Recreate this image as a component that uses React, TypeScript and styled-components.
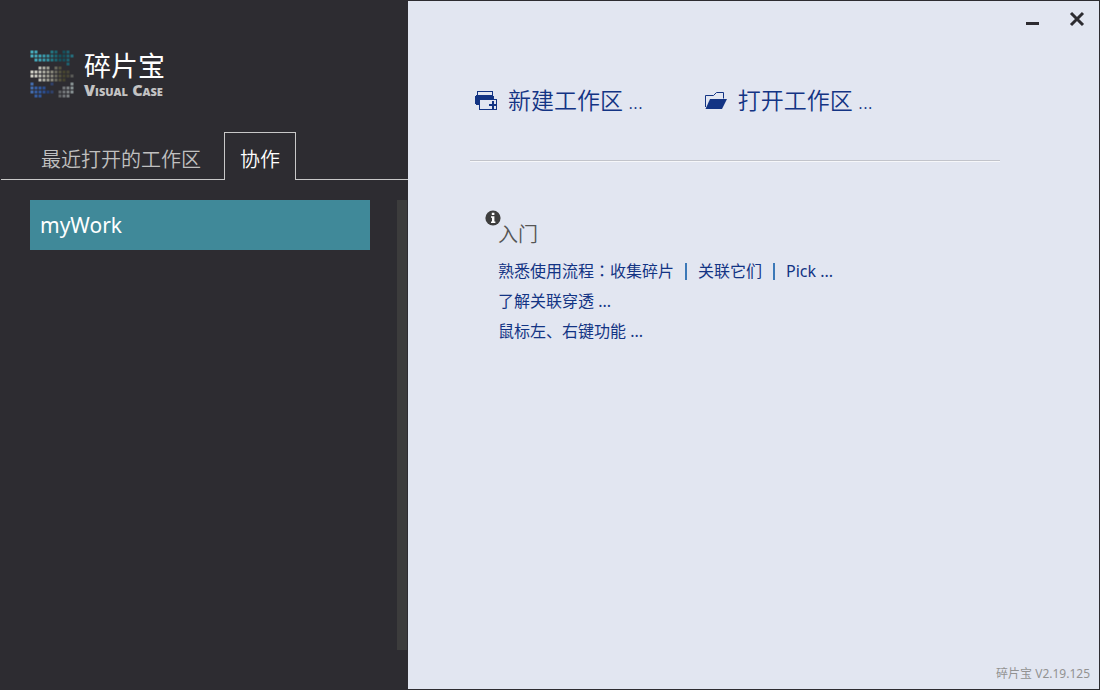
import React, { useState } from "react";
import styled, { createGlobalStyle } from "styled-components";

const GlobalStyle = createGlobalStyle`
  * { box-sizing: border-box; }
  body { margin: 0; }
  button { font: inherit; }
`;

const colors = {
  dark: "#2d2c31",
  light: "#e2e6f1",
  line: "#c8c8c8",
  accent: "#408999",
  link: "#133484",
};

const Frame = styled.div`
  display: flex;
  min-height: 100vh;
  border: 1px solid ${colors.dark};
  background: ${colors.light};
  font-family: "Noto Sans", "Noto Sans CJK SC", sans-serif;
`;

const Sidebar = styled.aside`
  flex: 0 0 407px;
  display: flex;
  flex-direction: column;
  background: ${colors.dark};
`;

const Brand = styled.header`
  display: flex;
  align-items: flex-start;
  gap: 9px;
  height: 131px;
  padding: 48px 29px 0;
`;

const BrandText = styled.div`
  display: flex;
  flex-direction: column;
`;

const BrandName = styled.h1`
  margin: 0;
  font-size: 27px;
  line-height: 34px;
  font-weight: 400;
  color: #fff;
`;

const BrandLatin = styled.span`
  font-family: "Open Sans", sans-serif;
  font-size: 16px;
  line-height: 14px;
  font-weight: 800;
  font-variant: small-caps;
  color: #c3c3c3;
`;

const Tabs = styled.div`
  display: flex;
  height: 48px;

  &::before,
  &::after {
    content: "";
    border-bottom: 1px solid ${colors.line};
  }
  &::before { width: 24px; }
  &::after { flex: 1; }
`;

const Tab = styled.button<{ $active: boolean }>`
  padding: ${(p) => (p.$active ? "5px 15px 0" : "7px 16px 0")};
  border-style: solid;
  border-width: ${(p) => (p.$active ? "1px 1px 0" : "0 0 1px")};
  border-color: ${colors.line};
  background: none;
  font-family: "Noto Sans CJK SC", sans-serif;
  font-size: 20px;
  line-height: 28px;
  font-weight: 350;
  color: ${(p) => (p.$active ? "#fff" : "#c0c0c0")};
  cursor: pointer;
  &:first-child { padding-right: 23px; }
`;

const ListArea = styled.div`
  flex: 1;
  display: flex;
  justify-content: space-between;
  padding: 20px 1px 39px 29px;
`;

const WorkList = styled.div`
  flex: 0 0 340px;
`;

const WorkItem = styled.button`
  display: block;
  width: 100%;
  height: 50px;
  padding: 0 10px;
  border: 0;
  background: ${colors.accent};
  color: #fff;
  font-size: 21px;
  text-align: left;
  cursor: pointer;
`;

const ScrollTrack = styled.div`
  width: 10px;
  background: #3c3c3c;
`;

const Main = styled.main`
  flex: 1;
  display: flex;
  flex-direction: column;
`;

const WindowBar = styled.div`
  display: flex;
  justify-content: flex-end;
  gap: 20px;
  height: 40px;
  padding: 6px 10px;
`;

const WindowButton = styled.button`
  width: 24px;
  height: 24px;
  padding: 0;
  border: 0;
  background: none;
  cursor: pointer;
  svg { display: block; }
`;

const Actions = styled.nav`
  display: flex;
  gap: 62px;
  height: 120px;
  margin: 0 99px 0 62px;
  padding: 43px 0 0 5px;
  border-bottom: 1px solid #c2c4cb;
  box-shadow: 0 1px #f6f7fa;
`;

const Action = styled.button`
  display: flex;
  align-items: center;
  gap: 10px;
  height: 34px;
  padding: 0;
  border: 0;
  background: none;
  color: ${colors.link};
  font-size: 23px;
  line-height: 30px;
  font-weight: 350;
  white-space: nowrap;
  cursor: pointer;
  svg { flex: none; }
`;

const Ellipsis = styled.span`
  font-size: 20px;
  font-weight: 350;
`;

const Guide = styled.section`
  flex: 1;
  display: flex;
  align-items: flex-start;
  padding: 49px 60px 0 77px;
`;

const GuideBody = styled.div`
  margin-left: -3px;
`;

const GuideTitle = styled.h2`
  margin: 10px 0 6px;
  font-size: 20px;
  line-height: 30px;
  font-weight: 350;
  color: #555;
`;

const GuideRow = styled.div`
  display: flex;
  gap: 10px;
  height: 30px;
  font-size: 16px;
  line-height: 30px;
`;

const GuideLink = styled.a`
  color: ${colors.link};
  text-decoration: none;
  font-weight: 400;
`;

const Colon = styled.span`
  font-family: "Noto Sans CJK TC", sans-serif;
  line-height: 16px;
`;

const Divider = styled.span`
  align-self: center;
  width: 2px;
  height: 17px;
  margin: 0 1px;
  background: #3c79b8;
`;

const Version = styled.footer`
  padding: 0 9px 6px;
  font-size: 12px;
  line-height: 18px;
  text-align: right;
  color: #929292;
`;

// Each row is a line of dots; "." leaves a gap.
const dotRows = [
  "##...##.##.",
  "###########",
  ".#########.",
  ".........#.",
  "..###.##...",
  "##########.",
  "###########",
  "..#######..",
  "#....#....#",
  "####....###",
  "######.####",
  ".##....###.",
];

const bandColors = [
  ["#49b3c6", "#43acbf", "#3fa5b8", "#3a9cae", "#3593a3", "#237885", "#1a6672", "#14535f", "#15505d", "#1d6271", "#25707f"],
  ["#d8d8cf", "#d0d0c6", "#c2c2b8", "#b0b0a5", "#a09f93", "#8a897d", "#6a695f", "#54523f", "#47452f", "#484636", "#5c5c59"],
  ["#4470b4", "#365fa6", "#325a9f", "#2c4f92", "#233f79", "#30416b", "#606164", "#626467", "#74777a", "#808486", "#8b9597"],
];

function Logo() {
  return (
    <svg width="45" height="49" viewBox="0 0 45 49" aria-hidden="true">
      {dotRows.flatMap((row, y) =>
        row.split("").map((cell, x) =>
          cell === "#" ? (
            <rect
              key={`${x}-${y}`}
              x={x * 4 + 0.5}
              y={y * 4 + 1.5}
              width="3"
              height="3"
              fill={bandColors[Math.floor(y / 4)][x]}
              fillOpacity="0.95"
            />
          ) : null
        )
      )}
    </svg>
  );
}

function NewWorkspaceIcon() {
  return (
    <svg width="23" height="20" viewBox="0 0 23 20" aria-hidden="true" shapeRendering="crispEdges">
      <path d="M2 0h16v5h-1V1H3v4H2z" fill="#133484" />
      <path d="M1 4h17v1h1v4H0V5h1zM0 8h5v6H1v-1H0z" fill="#133484" />
      <path d="M4 8h18v11H4z" fill="#133484" />
      <path d="M5 9h16v9H5z" fill="#e2e6f1" />
      <path d="M17 10h2v3h2v2h-2v3h-2v-3h-3v-2h3z" fill="#133484" />
    </svg>
  );
}

function OpenFolderIcon() {
  return (
    <svg width="23" height="20" viewBox="0 0 23 20" aria-hidden="true">
      <path d="M.5 16V4.500h8l3-3h7v6" fill="none" stroke="#133484" />
      <path d="M5 8h17L17 18H.5z" fill="#133484" />
    </svg>
  );
}

function InfoIcon() {
  return (
    <svg width="16" height="16" viewBox="0 0 16 16" aria-hidden="true">
      <circle cx="8" cy="8" r="7.600" fill="#3e3e3e" />
      <path d="M6.800 2.800h2.600v2.300H6.800zM6 6.300h3.400v5.200h1V13H6v-1.500h1V7.800H6z" fill="#fff" />
    </svg>
  );
}

export default function App() {
  const [tab, setTab] = useState(1);
  return (
    <>
      <GlobalStyle />
      <Frame>
        <Sidebar>
          <Brand>
            <Logo />
            <BrandText>
              <BrandName>碎片宝</BrandName>
              <BrandLatin>Visual Case</BrandLatin>
            </BrandText>
          </Brand>
          <Tabs role="tablist">
            {["最近打开的工作区", "协作"].map((label, i) => (
              <Tab key={label} role="tab" aria-selected={tab === i} $active={tab === i} onClick={() => setTab(i)}>
                {label}
              </Tab>
            ))}
          </Tabs>
          <ListArea>
            <WorkList>
              <WorkItem>myWork</WorkItem>
            </WorkList>
            <ScrollTrack />
          </ListArea>
        </Sidebar>
        <Main>
          <WindowBar>
            <WindowButton aria-label="最小化">
              <svg width="24" height="24" viewBox="0 0 24 24">
                <path d="M5 15h13v3H5z" fill="#2d2c31" />
              </svg>
            </WindowButton>
            <WindowButton aria-label="关闭">
              <svg width="24" height="24" viewBox="0 0 24 24">
                <path d="M6 6l12 12M18 6L6 18" stroke="#2d2c31" strokeWidth="3" />
              </svg>
            </WindowButton>
          </WindowBar>
          <Actions>
            <Action>
              <NewWorkspaceIcon />
              <span>
                新建工作区<Ellipsis> ...</Ellipsis>
              </span>
            </Action>
            <Action>
              <OpenFolderIcon />
              <span>
                打开工作区<Ellipsis> ...</Ellipsis>
              </span>
            </Action>
          </Actions>
          <Guide>
            <InfoIcon />
            <GuideBody>
              <GuideTitle>入门</GuideTitle>
              <GuideRow>
                <GuideLink href="#flow">
                  熟悉使用流程<Colon lang="zh-TW">：</Colon>收集碎片
                </GuideLink>
                <Divider />
                <GuideLink href="#link">关联它们</GuideLink>
                <Divider />
                <GuideLink href="#pick">Pick ...</GuideLink>
              </GuideRow>
              <GuideRow>
                <GuideLink href="#through">了解关联穿透 ...</GuideLink>
              </GuideRow>
              <GuideRow>
                <GuideLink href="#mouse">鼠标左、右键功能 ...</GuideLink>
              </GuideRow>
            </GuideBody>
          </Guide>
          <Version>碎片宝 V2.19.125</Version>
        </Main>
      </Frame>
    </>
  );
}
